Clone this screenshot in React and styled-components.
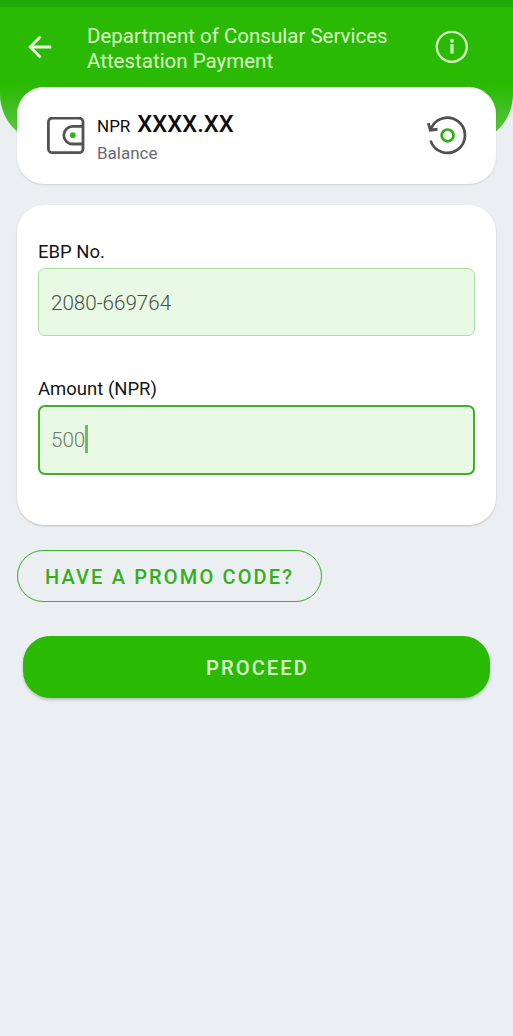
import React from "react";
import styled, { createGlobalStyle } from "styled-components";

const App = () => {
  return (
    <Screen>
      <GlobalStyle />
      <Header>
        <StatusBar />
        <Toolbar>
          <BackButton aria-label="Back">
            <svg width="24" height="24" viewBox="0 0 24 24" fill="none" stroke="#e9ffdf" strokeWidth="2.8">
              <path d="M23.2 12H2.2M12.6 1.6L2.2 12l10.4 10.4" />
            </svg>
          </BackButton>
          <Title>
            Department of Consular Services
            <br />
            Attestation Payment
          </Title>
          <InfoButton aria-label="Info">
            <svg width="34" height="34" viewBox="0 0 34 34" fill="none">
              <circle cx="16.8" cy="16.8" r="15" stroke="#d5fbc4" strokeWidth="2.3" />
              <circle cx="17" cy="10.7" r="2" fill="#d5fbc4" />
              <path d="M17 14.2v9.4" stroke="#d5fbc4" strokeWidth="3.2" />
            </svg>
          </InfoButton>
        </Toolbar>
      </Header>

      <BalanceCard>
        <WalletIcon />
        <BalanceInfo>
          <BalanceRow>
            <Currency>NPR</Currency>
            <Value>XXXX.XX</Value>
          </BalanceRow>
          <BalanceLabel>Balance</BalanceLabel>
        </BalanceInfo>
        <RefreshIcon />
      </BalanceCard>

      <FormCard>
        <Label>EBP No.</Label>
        <Field>
          <FieldText>2080-669764</FieldText>
        </Field>
        <Label $top="40px">Amount (NPR)</Label>
        <Field $focused>
          <FieldText>500</FieldText>
          <Caret />
        </Field>
      </FormCard>

      <PromoButton>HAVE A PROMO CODE?</PromoButton>
      <ProceedButton>PROCEED</ProceedButton>
    </Screen>
  );
};

const WalletIcon = () => (
  <svg width="38" height="38" viewBox="0 0 38 38" fill="none" stroke="#525254" strokeWidth="2.8">
    <rect x="1.4" y="1.1" width="34.6" height="34.6" rx="4" />
    <path d="M36 9.4H25.6a8.8 8.8 0 0 0 0 17.6H36" />
    <circle cx="25.8" cy="18.2" r="2.9" fill="#2fb415" stroke="none" />
  </svg>
);

const RefreshIcon = () => (
  <svg width="42" height="42" viewBox="0 0 42 42" fill="none">
    <path d="M4.7 14.6A17.6 17.6 0 1 1 4.6 25.6" stroke="#505052" strokeWidth="2.7" />
    <path d="M2.4 8.1l1.9 7.1 7.2-.9" stroke="#505052" strokeWidth="2.9" />
    <circle cx="21.6" cy="20.4" r="5.9" stroke="#2cb012" strokeWidth="2.7" />
  </svg>
);

const GlobalStyle = createGlobalStyle`
  * {
    box-sizing: border-box;
  }

  body {
    margin: 0;
    background: #ebeff2;
    font-family: Roboto, sans-serif;
  }

  svg {
    display: block;
    flex-shrink: 0;
  }

  button {
    font-family: inherit;
    border: none;
    background: none;
    padding: 0;
    cursor: pointer;
  }
`;

const Screen = styled.div`
  display: flex;
  flex-direction: column;
  width: 513px;
  height: 1036px;
  background: #ebeff2;
  overflow: hidden;
`;

const Header = styled.header`
  flex-shrink: 0;
  height: 144px;
  border-radius: 0 0 50px 50px;
  background: linear-gradient(#2bba04 86px, #5fc648 138px);
`;

const StatusBar = styled.div`
  height: 7px;
  background: #20a906;
`;

const Toolbar = styled.div`
  display: flex;
  align-items: center;
  height: 80px;
  padding: 0 44px 0 28px;
`;

const BackButton = styled.button`
  width: 59px;
`;

const Title = styled.h1`
  flex: 1;
  margin: 3px 0 0;
  color: #d9fbc9;
  font-size: 20.5px;
  font-weight: 400;
  line-height: 24.5px;
  white-space: nowrap;
`;

const InfoButton = styled.button`
  width: 34px;
`;

const BalanceCard = styled.section`
  flex-shrink: 0;
  display: flex;
  align-items: center;
  height: 97px;
  margin: -57px 17px 0;
  padding: 0 28px 0 30px;
  border-radius: 27px;
  background: #fff;
  box-shadow: 0 1px 2px rgba(0, 0, 0, 0.13);
`;

const BalanceInfo = styled.div`
  flex: 1;
  padding: 5px 0 3px 12px;
`;

const BalanceRow = styled.div`
  display: flex;
  align-items: baseline;
  gap: 7px;
  line-height: 31px;
  color: #0c0c0c;
`;

const Currency = styled.span`
  font-size: 17px;
`;

const Value = styled.span`
  font-size: 23.7px;
  font-weight: 500;
`;

const BalanceLabel = styled.div`
  color: #69696f;
  font-size: 17px;
  line-height: 23px;
`;

const FormCard = styled.section`
  flex-shrink: 0;
  height: 320px;
  margin: 21px 17px 0;
  padding: 34px 21px 0;
  border-radius: 27px;
  background: #fff;
  box-shadow: 0 1px 2px rgba(0, 0, 0, 0.2);
`;

const Label = styled.div`
  margin-top: ${({ $top }) => $top || "0"};
  padding-bottom: 3px;
  color: #151515;
  font-size: 18.5px;
  line-height: 26px;
`;

const Field = styled.div`
  display: flex;
  align-items: center;
  height: ${({ $focused }) => ($focused ? "70px" : "68px")};
  padding: ${({ $focused }) => ($focused ? "0 0 0 11px" : "2px 0 0 12px")};
  border: ${({ $focused }) => ($focused ? "2px solid #43ad2c" : "1px solid #addda2")};
  border-radius: 7px;
  background: #e8f9e4;
  color: ${({ $focused }) => ($focused ? "#6d7d6b" : "#465048")};
`;

const FieldText = styled.span`
  font-size: 20.6px;
  font-weight: 300;
`;

const Caret = styled.span`
  width: 3px;
  height: 28px;
  margin-top: -2px;
  background: #6cc15b;
`;

const PromoButton = styled.button`
  flex-shrink: 0;
  align-self: flex-start;
  width: 305px;
  height: 52px;
  margin: 25px 0 0 17px;
  padding-top: 2px;
  border: 1.5px solid #3dae27;
  border-radius: 26px;
  color: #35ae1d;
  font-size: 20px;
  font-weight: 500;
  letter-spacing: 2.15px;
`;

const ProceedButton = styled.button`
  flex-shrink: 0;
  height: 62px;
  margin: 34px 23px 0;
  padding: 2px 0 0 2px;
  border-radius: 27px;
  background: #2bba04;
  color: #dcfbcd;
  font-size: 20.2px;
  font-weight: 500;
  letter-spacing: 2.05px;
  box-shadow: 0 2px 3px rgba(0, 0, 0, 0.2);
`;

export default App;
